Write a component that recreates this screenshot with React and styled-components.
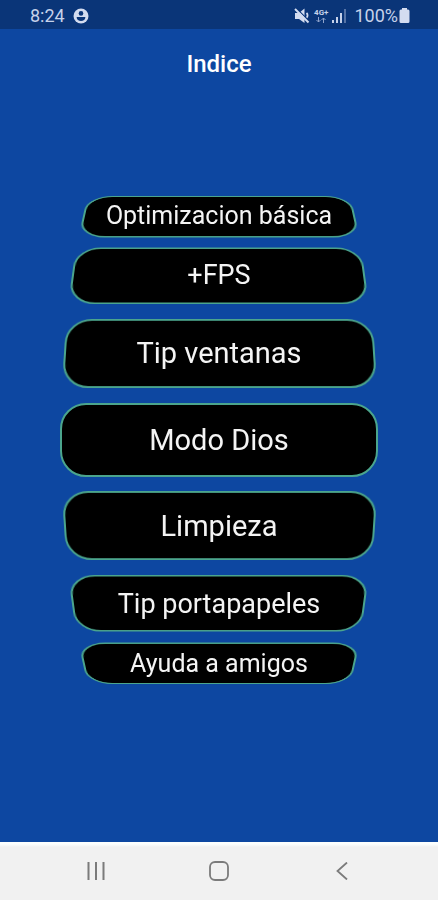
import React from "react";
import styled, { createGlobalStyle } from "styled-components";

const GlobalStyle = createGlobalStyle`
  body {
    margin: 0;
    background: #0d47a1;
    font-family: Roboto, "Liberation Sans", sans-serif;
  }
`;

const StyledScreen = styled.div`
  display: flex;
  flex-direction: column;
  min-height: 100vh;
  background: #0d47a1;
`;

const StyledStatusBar = styled.div`
  display: flex;
  justify-content: space-between;
  align-items: center;
  box-sizing: border-box;
  height: 29px;
  padding: 2px 28px 0 30px;
  background: #0a3578;
  color: #c6d2ea;
  font-size: 18px;
  line-height: 20px;
`;

const StyledStatusGroup = styled.div`
  display: flex;
  align-items: center;
  gap: ${({ $gap }) => $gap};

  svg {
    display: block;
  }
`;

const StyledNetwork = styled.div`
  display: flex;
  flex-direction: column;
  align-items: center;
  font-size: 8px;
  font-weight: 700;
  line-height: 8px;
`;

const StyledBattery = styled.div`
  display: flex;
  align-items: center;
  gap: 1px;
  margin-left: 4px;
`;

const StyledHeader = styled.header`
  display: flex;
  justify-content: center;
  align-items: center;
  height: 70px;

  h1 {
    margin: 0;
    color: #fff;
    font-size: 24px;
    font-weight: 500;
    line-height: 28px;
  }
`;

const StyledWheel = styled.main`
  display: flex;
  flex: 1;
  flex-direction: column;
  justify-content: center;
  padding-bottom: 62px;

  ul {
    display: flex;
    flex-direction: column;
    align-items: center;
    list-style: none;
    margin: 0;
    padding: 0;
  }

  li {
    display: flex;
    justify-content: center;
    width: 100%;
  }

  li + li {
    padding-top: 16px;
  }

  li:nth-child(2),
  li:last-child {
    padding-top: 11px;
  }
`;

const StyledWheelButton = styled.button`
  position: relative;
  z-index: 0;
  width: ${({ $width }) => $width};
  height: ${({ $height }) => $height}px;
  padding: 0;
  border: none;
  background: none;
  color: #f4f4f4;
  font-family: inherit;
  font-size: ${({ $fontSize }) => $fontSize}px;
  line-height: 32px;
  white-space: nowrap;
  cursor: pointer;

  /* the plate turns away with the wheel, the label stays flat */
  &::before {
    content: "";
    position: absolute;
    z-index: -1;
    top: 50%;
    left: 0;
    box-sizing: border-box;
    width: 100%;
    height: 74px;
    margin-top: -37px;
    border: 2px solid #4ba58d;
    border-radius: 26px;
    background: #000;
    transform: perspective(900px) rotateX(${({ $tilt }) => $tilt}deg);
  }
`;

const StyledNavBar = styled.nav`
  display: grid;
  grid-template-columns: repeat(3, 1fr);
  box-sizing: border-box;
  height: 58px;
  padding: 0 8%;
  background: linear-gradient(#fcfffe 2px, #f1f1f1 5px);
`;

const StyledNavButton = styled.button`
  display: flex;
  justify-content: center;
  align-items: center;
  padding: 0;
  border: none;
  background: none;
  color: #7b7b7b;
  cursor: pointer;
`;

const items = [
  { label: "Optimizacion básica", width: "62%", height: 41, fontSize: 25, tilt: 56 },
  { label: "+FPS", width: "67%", height: 56, fontSize: 27, tilt: 40 },
  { label: "Tip ventanas", width: "71%", height: 68, fontSize: 29, tilt: 21 },
  { label: "Modo Dios", width: "72.5%", height: 73, fontSize: 29, tilt: 0 },
  { label: "Limpieza", width: "71%", height: 68, fontSize: 29, tilt: -21 },
  { label: "Tip portapapeles", width: "67%", height: 56, fontSize: 27, tilt: -40 },
  { label: "Ayuda a amigos", width: "62%", height: 41, fontSize: 25, tilt: -56 },
];

const AccountIcon = () => (
  <svg width="16" height="16" viewBox="0 0 16 16">
    <circle cx="8" cy="8" r="7.5" fill="#d3dcf0" />
    <circle cx="8" cy="5.4" r="2.3" fill="#0a3578" />
    <path d="M3.600 9h8.800c0 2.600-2 4-4.400 4s-4.400-1.400-4.400-4z" fill="#0a3578" />
  </svg>
);

const MuteIcon = () => (
  <svg width="16" height="16" viewBox="0 0 16 16">
    <path d="M1 5h4l5.500-4.500v14.500L5 11H1z" fill="#d3dcf0" />
    <path d="M12.500 5c1.400 1.200 1.400 3.400 0 4.800" fill="none" stroke="#d3dcf0" strokeWidth="1.800" />
    <path d="M2.500.5l13 13" stroke="#0a3578" strokeWidth="1.200" />
    <path d="M1 1l13.500 13.500" stroke="#d3dcf0" strokeWidth="2" />
  </svg>
);

const ArrowsIcon = () => (
  <svg width="12" height="6" viewBox="0 0 12 6" fill="none" stroke="#8fa3cb">
    <path d="M3.500 0v5M1.500 3l2 2 2-2M8.500 6V1M6.500 3l2-2 2 2" />
  </svg>
);

const SignalIcon = () => (
  <svg width="14" height="14" viewBox="0 0 14 14" fill="#c6d2ea">
    <rect x="0" y="11" width="2" height="3" />
    <rect x="4" y="8" width="2" height="6" />
    <rect x="8" y="4" width="2" height="10" />
    <rect x="12" y="0" width="2" height="14" opacity="0.4" />
  </svg>
);

const BatteryIcon = () => (
  <svg width="11" height="15" viewBox="0 0 11 15" fill="#d3dcf0">
    <path d="M3 0h5v1.500h1A1.500 1.500 0 0 1 10.500 3v10.500A1.500 1.500 0 0 1 9 15H2A1.500 1.500 0 0 1 .5 13.500V3A1.500 1.500 0 0 1 2 1.500h1z" />
  </svg>
);

const StatusBar = () => (
  <StyledStatusBar>
    <StyledStatusGroup $gap="8px">
      <span>8:24</span>
      <AccountIcon />
    </StyledStatusGroup>
    <StyledStatusGroup $gap="4px">
      <MuteIcon />
      <StyledNetwork>
        <span>4G+</span>
        <ArrowsIcon />
      </StyledNetwork>
      <SignalIcon />
      <StyledBattery>
        <span>100%</span>
        <BatteryIcon />
      </StyledBattery>
    </StyledStatusGroup>
  </StyledStatusBar>
);

const NavBar = () => (
  <StyledNavBar>
    <StyledNavButton type="button" aria-label="Recientes">
      <svg width="18" height="18" viewBox="0 0 18 18" fill="none" stroke="currentColor" strokeWidth="2">
        <path d="M1.500 0v18M9 0v18M16.500 0v18" />
      </svg>
    </StyledNavButton>
    <StyledNavButton type="button" aria-label="Inicio">
      <svg width="20" height="20" viewBox="0 0 20 20" fill="none" stroke="currentColor" strokeWidth="1.800">
        <rect x="1" y="1" width="18" height="18" rx="5" />
      </svg>
    </StyledNavButton>
    <StyledNavButton type="button" aria-label="Atrás">
      <svg width="12" height="18" viewBox="0 0 12 18" fill="none" stroke="currentColor" strokeWidth="1.800">
        <path d="M11 .5L1.500 9l9.500 8.500" />
      </svg>
    </StyledNavButton>
  </StyledNavBar>
);

const App = () => (
  <>
    <GlobalStyle />
    <StyledScreen>
      <StatusBar />
      <StyledHeader>
        <h1>Indice</h1>
      </StyledHeader>
      <StyledWheel>
        <ul>
          {items.map((item) => (
            <li key={item.label}>
              <StyledWheelButton
                type="button"
                $width={item.width}
                $height={item.height}
                $fontSize={item.fontSize}
                $tilt={item.tilt}
              >
                {item.label}
              </StyledWheelButton>
            </li>
          ))}
        </ul>
      </StyledWheel>
      <NavBar />
    </StyledScreen>
  </>
);

export default App;
